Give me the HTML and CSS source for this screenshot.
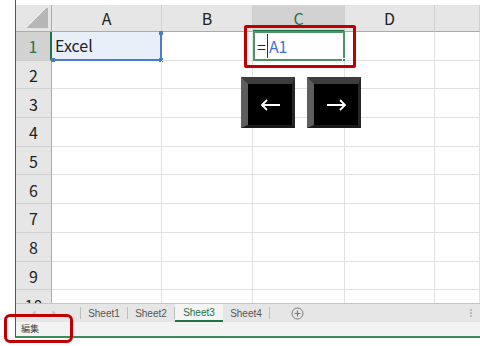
FILE: index.html
```html
<!DOCTYPE html>
<html>
<head>
<title>Excel</title>
<link rel="stylesheet" href="styles.css">
</head>
<body>
    <div class="app">
        <div class="sheet">
            <div class="hd corner"></div><div class="hd col">A</div><div class="hd col">B</div><div class="hd col on">C</div><div class="hd col">D</div><div class="hd col"></div>
            <div class="hd row on">1</div><div class="cell ref">Excel<i class="hdl tr"></i><i class="hdl bl"></i><i class="hdl br"></i></div><div class="cell"></div><div class="cell edit">=<span class="caret"></span><span class="blue">A1</span><i class="fill"></i></div><div class="cell"></div><div class="cell"></div>
            <div class="hd row">2</div><div class="cell"></div><div class="cell"></div><div class="cell"></div><div class="cell"></div><div class="cell"></div>
            <div class="hd row">3</div><div class="cell"></div><div class="cell"></div><div class="cell"></div><div class="cell"></div><div class="cell"></div>
            <div class="hd row">4</div><div class="cell"></div><div class="cell"></div><div class="cell"></div><div class="cell"></div><div class="cell"></div>
            <div class="hd row">5</div><div class="cell"></div><div class="cell"></div><div class="cell"></div><div class="cell"></div><div class="cell"></div>
            <div class="hd row">6</div><div class="cell"></div><div class="cell"></div><div class="cell"></div><div class="cell"></div><div class="cell"></div>
            <div class="hd row">7</div><div class="cell"></div><div class="cell"></div><div class="cell"></div><div class="cell"></div><div class="cell"></div>
            <div class="hd row">8</div><div class="cell"></div><div class="cell"></div><div class="cell"></div><div class="cell"></div><div class="cell"></div>
            <div class="hd row">9</div><div class="cell"></div><div class="cell"></div><div class="cell"></div><div class="cell"></div><div class="cell"></div>
            <div class="hd row">10</div><div class="cell"></div><div class="cell"></div><div class="cell"></div><div class="cell"></div><div class="cell"></div>

            <div class="key key-left">
                <svg width="21" height="12" viewBox="0 0 21 12"><path d="M20 6H2M7 1L2 6l5 5" fill="none" stroke="#fff" stroke-width="1.8"/></svg>
            </div>
            <div class="key key-right">
                <svg width="21" height="12" viewBox="0 0 21 12"><path d="M1 6h18M14 1l5 5-5 5" fill="none" stroke="#fff" stroke-width="1.8"/></svg>
            </div>
        </div>
        <div class="tabs">
            <div class="nav">
                <svg width="4" height="6" viewBox="0 0 4 6"><path d="M4 0v6L0 3z" fill="#c8c8c8"/></svg>
                <svg width="4" height="6" viewBox="0 0 4 6"><path d="M0 0v6l4-3z" fill="#c8c8c8"/></svg>
            </div>
            <div class="tab">Sheet1</div>
            <div class="tab">Sheet2</div>
            <div class="tab active">Sheet3</div>
            <div class="tab">Sheet4</div>
            <div class="add">
                <svg width="13" height="13" viewBox="0 0 13 13"><circle cx="6.5" cy="6.5" r="5.5" fill="none" stroke="#777" stroke-width="1"/><path d="M6.5 3.5v6M3.5 6.5h6" stroke="#777" stroke-width="1.2"/></svg>
            </div>
            <div class="grip"><i></i><i></i><i></i></div>
        </div>
        <div class="status">編集</div>
    </div>
    <div class="mark mark-cell"></div>
    <div class="mark mark-status"></div>
</body>
</html>
```

FILE: styles.css
```css
html {
    background: #fff;
}
body {
    margin: 0;
    position: relative;
    width: 480px;
    height: 346px;
    overflow: hidden;
    font-family: "Noto Sans CJK JP", "Noto Sans", sans-serif;
}

.app {
    margin-left: 15px;
    padding-top: 5px;
    border-left: 1px solid #217346;
    border-bottom: 2px solid #3e8a5a;
}

.sheet {
    position: relative;
    display: grid;
    grid-template-columns: 36px 110px 91px 92px 90px 1fr;
    grid-template-rows: 27px repeat(10, 28.7px);
    height: 298px;
    overflow: hidden;
}

.hd {
    box-sizing: border-box;
    display: flex;
    align-items: center;
    justify-content: center;
    background: #e6e6e6;
    color: #222;
    font-size: 16px;
    line-height: 1;
}
.col {
    border-right: 1px solid #d0d0d0;
    border-bottom: 1px solid #ababab;
}
.row {
    border-right: 1px solid #ababab;
    border-bottom: 1px solid #d0d0d0;
    padding-top: 1px;
}
.hd.on {
    background: #d2d2d2;
    color: #217346;
}
.col.on {
    border-bottom: 2px solid #217346;
}
.row.on {
    border-right: 2px solid #217346;
}
.corner {
    position: relative;
    border-right: 1px solid #ababab;
    border-bottom: 1px solid #ababab;
}
.corner::after {
    content: "";
    position: absolute;
    right: 3px;
    bottom: 3px;
    width: 21px;
    height: 21px;
    background: linear-gradient(to bottom right, transparent 50%, #b6b6b6 50%);
}

.cell {
    box-sizing: border-box;
    position: relative;
    border-right: 1px solid #e1e1e1;
    border-bottom: 1px solid #e1e1e1;
    font-size: 16px;
    color: #222;
    display: flex;
    align-items: center;
    padding-left: 3px;
}

.ref {
    background: #e9eff9;
    border-right: 2px solid #4a7bd1;
    border-bottom: 2px solid #4a7bd1;
}
.hdl {
    position: absolute;
    width: 4px;
    height: 4px;
    background: #4a7bd1;
}
.hdl.tr { top: -1px; right: -3px; }
.hdl.bl { bottom: -3px; left: -1px; }
.hdl.br { bottom: -3px; right: -3px; }

.edit {
    border: 2px solid #4f9466;
    margin: -1px 0 0 0;
    height: 30px;
    padding-left: 2px;
}
.caret {
    align-self: stretch;
    width: 1px;
    background: #333;
    margin: 1px;
}
.blue {
    color: #3b72d9;
}
.fill {
    position: absolute;
    right: -3px;
    bottom: -3px;
    width: 4px;
    height: 4px;
    background: #3a7a4e;
    border: 1px solid #fff;
    box-sizing: border-box;
}

.key {
    position: absolute;
    top: 72px;
    box-sizing: border-box;
    width: 54px;
    height: 51px;
    background: #000;
    border-style: solid;
    border-width: 7px 3px 3px 7px;
    border-color: #3d3d3d #262626 #1a1a1a #5e5e5e;
    display: flex;
    align-items: center;
    justify-content: center;
}
.key-left { left: 225px; }
.key-right { left: 291px; }

.tabs {
    box-sizing: border-box;
    height: 19px;
    background: #e6e6e6;
    border-top: 1px solid #c6c6c6;
    display: flex;
    align-items: stretch;
    font-family: "Liberation Sans", sans-serif;
    font-size: 10px;
    color: #555;
}
.nav {
    width: 65px;
    display: flex;
    align-items: center;
    gap: 16px;
    padding-left: 16px;
    box-sizing: border-box;
    border-right: 1px solid #bdbdbd;
    margin: 3px 0;
}
.tab {
    width: 46px;
    display: flex;
    align-items: center;
    justify-content: center;
    border-right: 1px solid #bdbdbd;
    margin: 3px 0;
}
.tab.active {
    margin: 0;
    background: #f4f4f4;
    color: #217346;
    border-right: 0;
    border-bottom: 2px solid #217346;
    width: 48px;
}
.add {
    width: 55px;
    display: flex;
    align-items: center;
    justify-content: center;
}
.grip {
    margin-left: auto;
    width: 10px;
    display: flex;
    flex-direction: column;
    justify-content: center;
    gap: 1px;
}
.grip i {
    width: 2px;
    height: 2px;
    background: #bbb;
}

.status {
    height: 14px;
    background: #f3f3f3;
    font-size: 9px;
    color: #444;
    line-height: 14px;
    padding-left: 5px;
}

.mark {
    position: absolute;
    border: 3px solid #c00000;
    box-sizing: border-box;
}
.mark-cell {
    left: 244px;
    top: 25px;
    width: 112px;
    height: 43px;
    border-radius: 2px;
}
.mark-status {
    left: 4px;
    top: 314px;
    width: 69px;
    height: 29px;
    border-radius: 6px;
}
```
